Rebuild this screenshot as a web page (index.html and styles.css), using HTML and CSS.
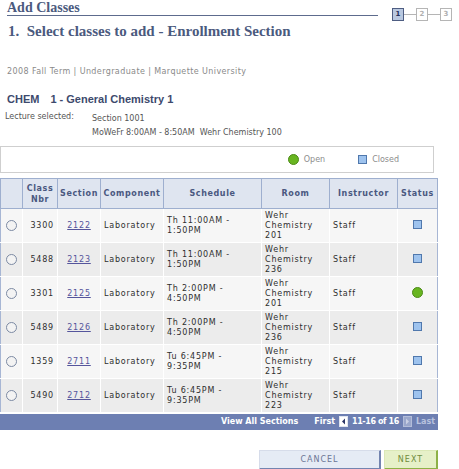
FILE: index.html
```html
<!DOCTYPE html>
<html lang="en">
<head>
    <meta charset="UTF-8">
    <title>Add Classes</title>
    <link rel="stylesheet" href="styles.css">
</head>
<body>

    <div class="pagehead">
        <h1 class="pagetitle">Add Classes</h1>
        <div class="steps">
            <span class="step current">1</span><span class="joint"></span><span class="step">2</span><span class="joint"></span><span class="step">3</span>
        </div>
    </div>

    <h2 class="subtitle">1.&nbsp; Select classes to add - Enrollment Section</h2>

    <p class="term">2008 Fall Term | Undergraduate | Marquette University</p>

    <div class="course"><span class="subj">CHEM</span><span>1 - General Chemistry 1</span></div>
    <div class="lecture">
        <div class="lbl">Lecture selected:</div>
        <div class="lines">
            <div>Section 1001</div>
            <div>MoWeFr 8:00AM - 8:50AM &nbsp;Wehr Chemistry 100</div>
        </div>
    </div>

    <div class="legend">
        <span class="key"><span class="open"></span>Open</span>
        <span class="key"><span class="closed"></span>Closed</span>
    </div>

    <table class="grid">
        <colgroup>
            <col style="width:22px"><col style="width:35px"><col style="width:43px"><col style="width:63px">
            <col style="width:98px"><col style="width:68px"><col style="width:68px"><col style="width:40px">
        </colgroup>
        <thead>
            <tr>
                <th></th>
                <th>Class<br>Nbr</th>
                <th>Section</th>
                <th>Component</th>
                <th>Schedule</th>
                <th>Room</th>
                <th>Instructor</th>
                <th>Status</th>
            </tr>
        </thead>
        <tbody>
            <tr>
                <td class="sel"><span class="radio"></span></td>
                <td class="num">3300</td>
                <td class="sect"><a href="#">2122</a></td>
                <td>Laboratory</td>
                <td>Th 11:00AM -<br>1:50PM</td>
                <td>Wehr<br>Chemistry<br>201</td>
                <td>Staff</td>
                <td class="stat"><span class="closed"></span></td>
            </tr>
            <tr>
                <td class="sel"><span class="radio"></span></td>
                <td class="num">5488</td>
                <td class="sect"><a href="#">2123</a></td>
                <td>Laboratory</td>
                <td>Th 11:00AM -<br>1:50PM</td>
                <td>Wehr<br>Chemistry<br>236</td>
                <td>Staff</td>
                <td class="stat"><span class="closed"></span></td>
            </tr>
            <tr>
                <td class="sel"><span class="radio"></span></td>
                <td class="num">3301</td>
                <td class="sect"><a href="#">2125</a></td>
                <td>Laboratory</td>
                <td>Th 2:00PM -<br>4:50PM</td>
                <td>Wehr<br>Chemistry<br>201</td>
                <td>Staff</td>
                <td class="stat"><span class="open"></span></td>
            </tr>
            <tr>
                <td class="sel"><span class="radio"></span></td>
                <td class="num">5489</td>
                <td class="sect"><a href="#">2126</a></td>
                <td>Laboratory</td>
                <td>Th 2:00PM -<br>4:50PM</td>
                <td>Wehr<br>Chemistry<br>236</td>
                <td>Staff</td>
                <td class="stat"><span class="closed"></span></td>
            </tr>
            <tr>
                <td class="sel"><span class="radio"></span></td>
                <td class="num">1359</td>
                <td class="sect"><a href="#">2711</a></td>
                <td>Laboratory</td>
                <td>Tu 6:45PM -<br>9:35PM</td>
                <td>Wehr<br>Chemistry<br>215</td>
                <td>Staff</td>
                <td class="stat"><span class="closed"></span></td>
            </tr>
            <tr>
                <td class="sel"><span class="radio"></span></td>
                <td class="num">5490</td>
                <td class="sect"><a href="#">2712</a></td>
                <td>Laboratory</td>
                <td>Tu 6:45PM -<br>9:35PM</td>
                <td>Wehr<br>Chemistry<br>223</td>
                <td>Staff</td>
                <td class="stat"><span class="closed"></span></td>
            </tr>
        </tbody>
        <tfoot>
            <tr>
                <td colspan="8">
                    <div class="nav">
                        <span class="viewall">View All Sections</span>
                        <span>First</span>
                        <svg class="arrow" width="9" height="11" viewBox="0 0 9 11"><rect x="0.5" y="0.5" width="8" height="10" fill="#fff" stroke="#dfe4ef"/><path d="M6 2.5 L3 5.5 L6 8.5 Z" fill="#2b3566"/></svg>
                        <span class="count">11-16 of 16</span>
                        <svg class="arrow" width="9" height="11" viewBox="0 0 9 11"><rect x="0.5" y="0.5" width="8" height="10" fill="#9aa7cb" stroke="#b3bdd9"/><path d="M3 2.5 L6 5.5 L3 8.5 Z" fill="#c9d0e4"/></svg>
                        <span class="dim">Last</span>
                    </div>
                </td>
            </tr>
        </tfoot>
    </table>

    <div class="buttons">
        <button class="btn cancel">CANCEL</button>
        <button class="btn next">NEXT</button>
    </div>

</body>
</html>
```

FILE: styles.css
```css
body {
    margin: 0;
    font-family: "DejaVu Sans", Verdana, sans-serif;
    font-size: 8px;
    color: #333;
    background: #fff;
}
.pagehead {
    display: flex;
    align-items: flex-end;
    padding-left: 7px;
}
.pagetitle {
    flex: 1;
    margin: 0 14px 0 0;
    font: bold 14px/15px "Liberation Serif", Georgia, serif;
    color: #4b5a7e;
    border-bottom: 1px solid #5d6b8d;
}
.steps {
    display: flex;
    align-items: center;
    margin: 0 7px -5px 0;
}
.step {
    width: 10px;
    height: 11px;
    border: 1px solid #b5b5b5;
    font: bold 7px/11px "DejaVu Sans", sans-serif;
    text-align: center;
    color: #b0b0b0;
}
.step.current {
    background: #b9c8e0;
    border-color: #4e5d82;
    color: #26305a;
}
.joint {
    width: 12px;
    height: 1px;
    background: #b5b5b5;
}
.subtitle {
    margin: 7px 0 0 8px;
    font: bold 15px/16px "Liberation Serif", Georgia, serif;
    color: #4b5a7e;
}
.term {
    margin: 28px 0 0 7px;
    color: #8a8a8a;
    line-height: 10px;
    letter-spacing: 0.4px;
}
.course {
    margin: 16px 0 0 7px;
    font: bold 11px/12px "Liberation Sans", Arial, sans-serif;
    color: #3d4a6d;
}
.course .subj {
    margin-right: 11px;
}
.lecture {
    display: flex;
    margin: 7px 0 0 5px;
    color: #555;
}
.lecture .lbl {
    width: 87px;
}
.lecture .lines div {
    line-height: 14px;
}
.legend {
    display: flex;
    justify-content: flex-end;
    align-items: center;
    gap: 33px;
    width: 398px;
    height: 25px;
    margin-top: 6px;
    padding-right: 34px;
    border: 1px solid #cfcfcf;
    color: #8d8d8d;
}
.key {
    display: flex;
    align-items: center;
    gap: 5px;
}
.open {
    display: inline-block;
    width: 11px;
    height: 11px;
    box-sizing: border-box;
    border-radius: 50%;
    background: #68b520;
    border: 1px solid #4c8a17;
}
.closed {
    display: inline-block;
    width: 9px;
    height: 9px;
    box-sizing: border-box;
    background: #9ec3ee;
    border: 1px solid #5078ad;
}
.grid {
    margin-top: 5px;
    width: 437px;
    table-layout: fixed;
    border-collapse: collapse;
}
.grid th {
    height: 29px;
    padding: 0 2px;
    background: #dfe5f0;
    border: 1px solid #9eafcf;
    color: #4a5880;
    font-weight: bold;
    letter-spacing: 0.6px;
    line-height: 11px;
}
.grid td {
    height: 33px;
    padding: 0 3px;
    border: 1px solid #fff;
    letter-spacing: 0.8px;
    line-height: 10px;
    color: #2e2e2e;
}
.grid tbody tr:nth-child(odd) td {
    background: #f6f6f6;
}
.grid tbody tr:nth-child(even) td {
    background: #ececec;
}
.grid tbody td:first-child {
    border-left-color: #a7b6d4;
}
.grid tbody td:last-child {
    border-right-color: #a7b6d4;
}
.grid td.num {
    text-align: right;
}
.grid td.sect,
.grid td.stat,
.grid td.sel {
    text-align: center;
}
.grid td.sect a {
    color: #55559c;
}
.radio {
    display: inline-block;
    width: 11px;
    height: 11px;
    box-sizing: border-box;
    border: 1px solid #7c8aa3;
    border-radius: 50%;
    background: #f3f3f3;
    vertical-align: middle;
}
.grid tfoot td {
    height: 15px;
    padding: 0 2px 0 0;
    background: #6d7fb2;
    border: 1px solid #6d7fb2;
    border-top: 2px solid #fff;
    letter-spacing: 0;
}
.nav {
    display: flex;
    justify-content: flex-end;
    align-items: center;
    gap: 4px;
    color: #fff;
    font-weight: bold;
}
.nav .viewall {
    margin-right: 12px;
}
.nav .count {
    letter-spacing: -0.4px;
}
.nav .dim {
    color: #b8c2de;
}
.buttons {
    display: flex;
    justify-content: flex-end;
    gap: 3px;
    margin-top: 20px;
    padding-right: 21px;
}
.btn {
    height: 20px;
    padding: 0;
    border: 1px solid #d6dcea;
    font: 8px "DejaVu Sans", sans-serif;
    letter-spacing: 1px;
}
.cancel {
    width: 122px;
    background: #e5ebf5;
    border-right: 2px solid #7384b0;
    border-bottom: 2px solid #7384b0;
    color: #6a7594;
}
.next {
    width: 54px;
    background: #e6f0c8;
    border-color: #dbe8b7;
    border-right: 2px solid #8db146;
    border-bottom: 2px solid #8db146;
    color: #6f8c3c;
}
```
